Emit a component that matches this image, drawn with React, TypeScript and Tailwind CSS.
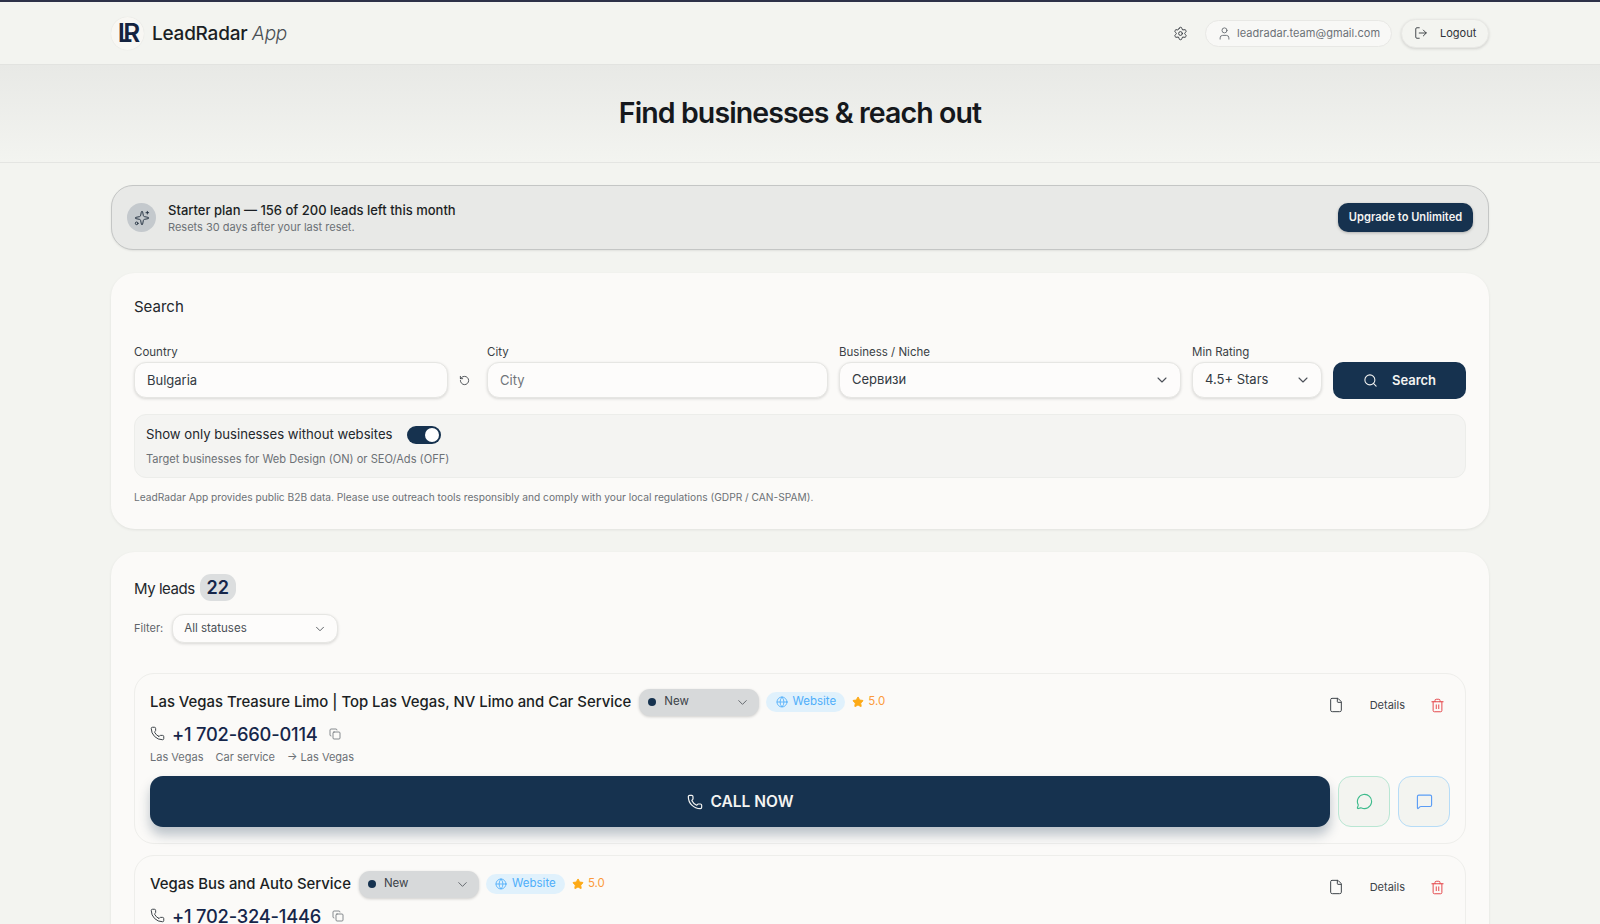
import { ChevronDown, Copy, File, Globe, LogOut, MessageCircle, MessageSquare, Phone, RotateCcw, Search, Settings, Sparkles, Star, Trash2, User } from 'lucide-react'

const inputClass = 'h-9 w-full rounded-xl border border-[#e6e6e3] bg-[#fdfcfb] px-3 text-[13px] text-[#333a42] shadow-[0_1px_3px_rgba(0,0,0,0.14)] outline-none placeholder:text-[#6f747a]'
const labelClass = 'mb-[1px] block text-[11.5px] leading-[17px] text-[#3a3f45]'

interface Lead {
  name: string
  phone: string
  city?: string
  category?: string
}

const LEADS: Lead[] = [
  { name: 'Las Vegas Treasure Limo | Top Las Vegas, NV Limo and Car Service', phone: '+1 702-660-0114', city: 'Las Vegas', category: 'Car service' },
  { name: 'Vegas Bus and Auto Service', phone: '+1 702-324-1446' },
]

function Dropdown({ label, className }: { label: string; className: string }) {
  return (
    <div className={'flex h-9 items-center justify-between rounded-xl border border-[#e6e6e3] bg-[#fdfcfb] pl-3 pr-[10px] text-[13px] text-[#333a42] shadow-[0_1px_3px_rgba(0,0,0,0.14)] ' + className}>
      <span>{label}</span>
      <ChevronDown size={16} strokeWidth={1.6} className="text-[#4b5058]" />
    </div>
  )
}

function LeadCard({ lead }: { lead: Lead }) {
  return (
    <div className="rounded-[20px] border border-[#eeeeeb] bg-[#fbfaf8] px-[15px] pb-[15px] pt-[14px]">
      <div className="flex h-[28px] items-center">
        <h3 className="text-[14.9px] font-medium text-[#1b1f24]">{lead.name}</h3>
        <div className="ml-[8px] flex h-[27px] w-[120px] items-center rounded-[11px] bg-[#d7d9da] px-[9px] text-[11.5px] text-[#3d4349] shadow-[0_1px_3px_rgba(0,0,0,0.18)]">
          <span className="mr-[8px] h-[8px] w-[8px] rounded-full bg-[#16324f]" />
          <span>New</span>
          <ChevronDown size={15} strokeWidth={1.6} className="ml-auto text-[#666b70]" />
        </div>
        <div className="ml-[7px] flex h-5 w-[79px] items-center justify-center gap-[5px] rounded-full bg-[#e0f1fc] text-[11.5px] text-[#4eaefa]">
          <Globe size={12} strokeWidth={1.7} />
          <span>Website</span>
        </div>
        <div className="ml-[7px] flex items-center gap-[4px] text-[11.5px] text-[#fb9a3c]">
          <Star size={12} className="fill-[#fdaa16] text-[#fdaa16]" />
          <span>5.0</span>
        </div>
        <div className="ml-auto mt-[6px] flex items-center pr-[5px] text-[11px] text-[#3d4349]">
          <File size={16} strokeWidth={1.5} />
          <span className="ml-[26px]">Details</span>
          <Trash2 size={15} strokeWidth={1.6} className="ml-[25px] text-[#e5484d]" />
        </div>
      </div>
      <div className="mt-[3px] flex h-[29px] items-center">
        <Phone size={15} strokeWidth={1.6} className="text-[#3d4349]" />
        <span className="ml-[7px] text-[18.3px] font-medium leading-[18px] tracking-[-0.2px] text-[#16264a]">{lead.phone}</span>
        <Copy size={12} strokeWidth={1.6} className="ml-[11px] text-[#6b7075]" />
      </div>
      {lead.city && (
        <>
          <div className="flex h-[18px] items-center gap-[12px] text-[11px] text-[#6b7075]">
            <span>{lead.city}</span>
            <span>{lead.category}</span>
            <span>→ {lead.city}</span>
          </div>
          <div className="mb-[1px] mt-[10px] flex h-[51px] items-stretch gap-2">
            <button className="flex flex-1 items-center justify-center gap-[8px] rounded-[13px] bg-[#16324f] text-[15.5px] font-semibold text-[#f4f4f2] shadow-[0_8px_12px_rgba(22,50,79,0.28)]">
              <Phone size={16} strokeWidth={1.8} />
              CALL NOW
            </button>
            <button className="flex w-[52px] items-center justify-center rounded-[13px] border-[1.5px] border-[#b9e6d3] bg-[#f3f4f0]">
              <MessageCircle size={17} strokeWidth={1.6} className="text-[#3dbb8c]" />
            </button>
            <button className="flex w-[52px] items-center justify-center rounded-[13px] border-[1.5px] border-[#b6dcf7] bg-[#f3f4f0]">
              <MessageSquare size={17} strokeWidth={1.6} className="text-[#5b9df5]" />
            </button>
          </div>
        </>
      )}
    </div>
  )
}

export default function App() {
  return (
    <div className="h-[924px] overflow-hidden border-t-2 border-[#2d3148] bg-[#f3f4f0] font-['Inter',sans-serif] text-[#1b1f24]">
      {/* Header */}
      <header className="flex h-[63px] items-center border-b border-[#e2e3e0] px-[111px]">
        <div className="flex h-[33px] w-[33px] items-center justify-center rounded-full bg-[#f8f7f3] pr-[6px] text-[26px] font-semibold leading-none text-[#14233f] shadow-[0_0_1px_rgba(0,0,0,0.12)]">
          <span className="tracking-[-9px]">LR</span>
        </div>
        <div className="ml-[8px] mt-[2px] text-[19px] font-medium tracking-[-0.25px] text-[#1b1f24]">
          LeadRadar <span className="font-light italic text-[#4a4f55]">App</span>
        </div>
        <div className="ml-auto flex items-center">
          <Settings size={15} strokeWidth={1.5} className="text-[#33383e]" />
          <div className="ml-[17px] flex h-[27px] w-[187px] items-center rounded-full border border-[#e8e8e5] bg-[#f8f8f6] pl-[11px] text-[11px] tracking-[0.05px] text-[#6c7176]">
            <User size={15} strokeWidth={1.5} />
            <span className="ml-[5px]">leadradar.team@gmail.com</span>
          </div>
          <div className="ml-[9px] flex h-[29px] w-[88px] items-center rounded-full border border-[#e8e8e5] bg-[#f3f4f0] pl-[12px] text-[11px] text-[#2e3238] shadow-[0_1px_3px_rgba(0,0,0,0.14)]">
            <LogOut size={14} strokeWidth={1.5} />
            <span className="ml-[12px]">Logout</span>
          </div>
        </div>
      </header>

      {/* Hero */}
      <section className="flex h-[98px] items-center justify-center border-b border-[#e4e5e2] bg-gradient-to-b from-[#e8e9e6] to-[#f3f4f0]">
        <h1 className="text-[28.5px] font-semibold tracking-[-0.9px] text-[#15181c]">Find businesses &amp; reach out</h1>
      </section>

      <main className="flex flex-col gap-[23px] px-[111px] pt-[22px]">
        {/* Plan banner */}
        <div className="flex h-[65px] items-center rounded-[22px] border border-[#c4c6c5] bg-[#e8e9e7] px-[15px] shadow-[0_1px_2px_rgba(0,0,0,0.08)]">
          <div className="flex h-[29px] w-[29px] items-center justify-center rounded-full bg-[#c4c9cd]">
            <Sparkles size={16} strokeWidth={1.4} className="text-[#1f2d3d]" />
          </div>
          <div className="ml-[12px] pt-[1px]">
            <div className="text-[13px] font-medium leading-[17px] text-[#1b1f24]">Starter plan — 156 of 200 leads left this month</div>
            <div className="text-[11px] leading-[16px] text-[#6c7176]">Resets 30 days after your last reset.</div>
          </div>
          <button className="ml-auto h-[29px] w-[135px] rounded-[10px] bg-[#16324f] text-[11.1px] font-semibold text-[#f4f4f2] shadow-[0_1px_3px_rgba(0,0,0,0.25)]">
            Upgrade to Unlimited
          </button>
        </div>

        {/* Search */}
        <section className="h-[256px] rounded-[24px] bg-[#fbfaf8] px-[23px] pt-[24px] shadow-[0_1px_3px_rgba(0,0,0,0.08)]">
          <h2 className="text-[15px] leading-[20px] text-[#23272c]">Search</h2>
          <div className="mt-[27px] flex items-end">
            <div className="w-[314px]">
              <label className={labelClass}>Country</label>
              <input className={inputClass} defaultValue="Bulgaria" />
            </div>
            <div className="flex h-9 w-[39px] items-center justify-center pr-[6px]">
              <RotateCcw size={11} strokeWidth={1.8} className="text-[#33383e]" />
            </div>
            <div className="w-[341px]">
              <label className={labelClass}>City</label>
              <input className={inputClass} placeholder="City" />
            </div>
            <div className="ml-[11px] w-[342px]">
              <label className={labelClass}>Business / Niche</label>
              <Dropdown label="Сервизи" className="w-full" />
            </div>
            <div className="ml-[11px] w-[130px]">
              <label className={labelClass}>Min Rating</label>
              <Dropdown label="4.5+ Stars" className="w-full" />
            </div>
            <button className="-mb-[1px] ml-[11px] flex h-[37px] w-[133px] items-center justify-center gap-[14px] rounded-[10px] bg-[#16324f] text-[13px] font-semibold text-[#f4f4f2]">
              <Search size={15} strokeWidth={1.7} />
              Search
            </button>
          </div>
          <div className="mt-4 h-[64px] rounded-xl border border-[#ecedea] bg-[#f4f4f2] px-[11px] pt-[10px]">
            <div className="flex items-center gap-[14px]">
              <span className="text-[13.15px] text-[#23272c]">Show only businesses without websites</span>
              <div className="flex h-[18px] w-[34px] items-center justify-end rounded-full bg-[#16324f] pr-[2px]">
                <span className="h-[14px] w-[14px] rounded-full bg-white" />
              </div>
            </div>
            <div className="mt-[6px] text-[11.1px] leading-[16px] text-[#6c7176]">Target businesses for Web Design (ON) or SEO/Ads (OFF)</div>
          </div>
          <p className="mt-3 text-[10.2px] leading-[15px] text-[#6c7176]">
            LeadRadar App provides public B2B data. Please use outreach tools responsibly and comply with your local regulations (GDPR / CAN-SPAM).
          </p>
        </section>

        {/* Leads */}
        <section className="rounded-[24px] bg-[#fbfaf8] px-[23px] pb-6 pt-[22px] shadow-[0_1px_3px_rgba(0,0,0,0.08)]">
          <div className="flex items-center gap-[5px]">
            <h2 className="pt-[4px] text-[15px] tracking-[-0.45px] text-[#23272c]">My leads</h2>
            <span className="flex h-[27px] w-[36px] items-center justify-center rounded-[11px] bg-[#dcdedf] text-[18px] font-semibold text-[#16264a]">22</span>
          </div>
          <div className="mt-[13px] flex items-center gap-[9px]">
            <span className="text-[11px] text-[#5f6469]">Filter:</span>
            <div className="flex h-[29px] w-[166px] items-center justify-between rounded-xl border border-[#e6e6e3] bg-[#fdfcfb] pl-[11px] pr-[10px] text-[11.5px] text-[#4a4f55] shadow-[0_1px_3px_rgba(0,0,0,0.14)]">
              <span>All statuses</span>
              <ChevronDown size={14} strokeWidth={1.5} />
            </div>
          </div>
          <div className="mt-[30px] flex flex-col gap-[11px]">
            {LEADS.map(l => <LeadCard key={l.phone} lead={l} />)}
          </div>
        </section>
      </main>
    </div>
  )
}
